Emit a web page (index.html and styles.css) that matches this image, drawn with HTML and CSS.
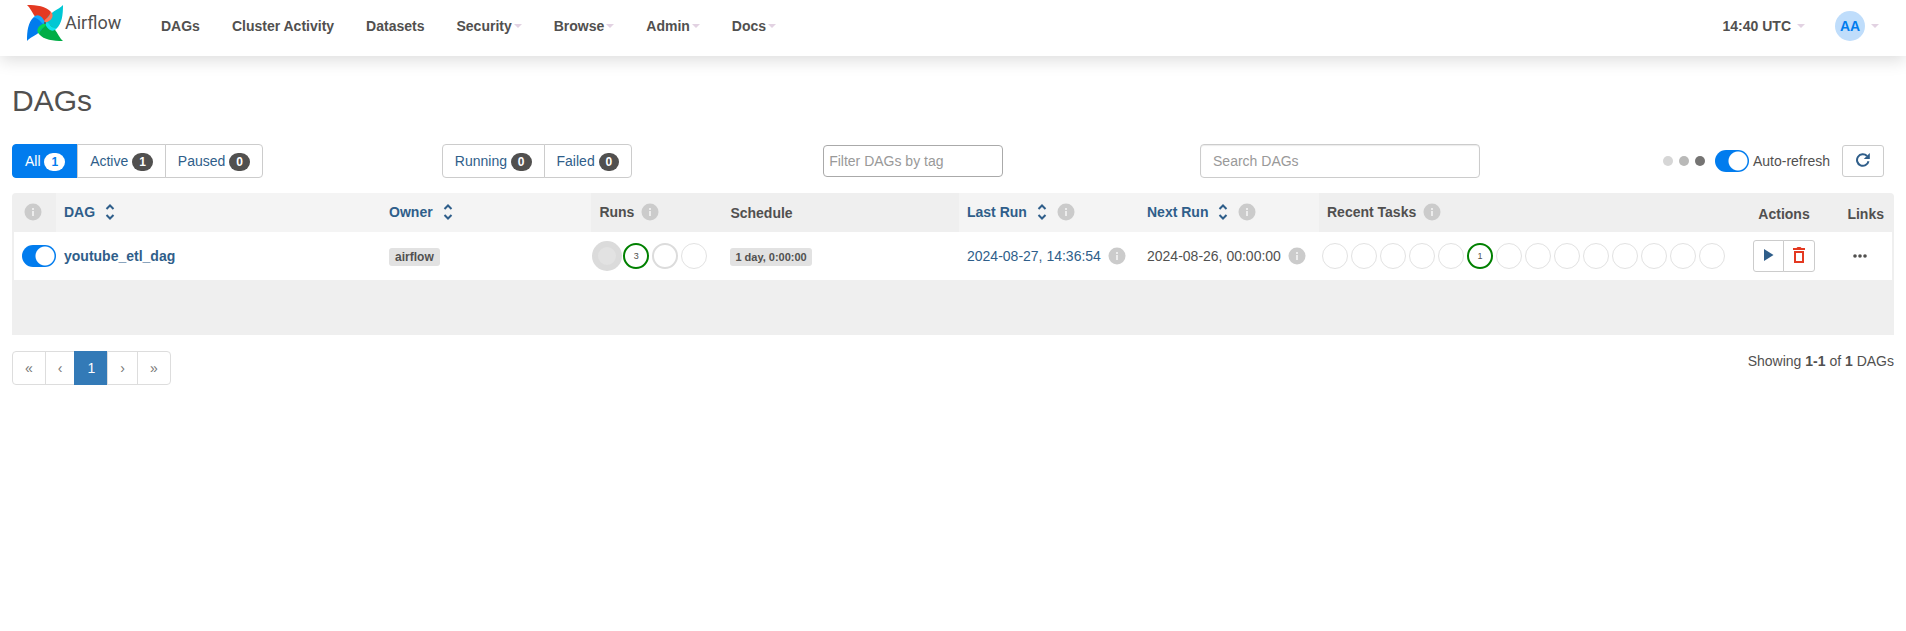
FILE: index.html
```html
<!DOCTYPE html>
<html lang="en">
<head>
<meta charset="utf-8">
<title>DAGs - Airflow</title>
<link rel="stylesheet" href="styles.css">
</head>
<body>
<svg class="defs" aria-hidden="true">
  <symbol id="info" viewBox="0 0 18 18"><circle cx="9" cy="9" r="8.5" fill="#cbcbcb"/><path d="M8 8h2v5H8zM8 5h2v2H8z" fill="#ececec"/></symbol>
  <symbol id="sort" viewBox="0 0 10 16"><path d="M1.500 5 5 1.500 8.500 5M1.500 11 5 14.500 8.500 11" fill="none" stroke="currentColor" stroke-width="2"/></symbol>
  <symbol id="blade" viewBox="0 0 36 36"><path d="M0 0C10 0 19 1 24 7 25 12 22 16 18 18 6 14 7 7 0 0Z"/></symbol>
  <symbol id="fold" viewBox="0 0 36 36"><path d="M23.500 6.500C28 10 25 16 18 18 15 14 23 14 23.500 6.500Z"/></symbol>
</svg>
<header class="navbar">
  <a class="brand" href="#">
    <svg class="pinwheel" viewBox="0 0 36 36" aria-hidden="true">
      <use href="#blade" fill="#e43921"/>
      <use href="#blade" fill="#00c7d4" transform="rotate(90 18 18)"/>
      <use href="#blade" fill="#00ad46" transform="rotate(180 18 18)"/>
      <use href="#blade" fill="#017cee" transform="rotate(270 18 18)"/>
      <use href="#fold" fill="#ff7557"/>
      <use href="#fold" fill="#11e1ee" transform="rotate(90 18 18)"/>
      <use href="#fold" fill="#04d659" transform="rotate(180 18 18)"/>
      <use href="#fold" fill="#14aaff" transform="rotate(270 18 18)"/>
      <circle cx="18" cy="18" r="1" fill="#51504f"/>
    </svg>
    <span>Airflow</span>
  </a>
  <nav class="menu main-menu" aria-label="Main">
    <a href="#">DAGs</a>
    <a href="#">Cluster Activity</a>
    <a href="#">Datasets</a>
    <a href="#">Security<b class="caret"></b></a>
    <a href="#">Browse<b class="caret"></b></a>
    <a href="#">Admin<b class="caret"></b></a>
    <a href="#">Docs<b class="caret"></b></a>
  </nav>
  <nav class="menu account" aria-label="Account">
    <a href="#">14:40 UTC<b class="caret"></b></a>
    <a href="#"><span class="avatar">AA</span><b class="caret"></b></a>
  </nav>
</header>
<main class="page">
  <h2 class="title">DAGs</h2>
  <div class="filters">
    <div class="group">
      <a class="btn active" href="#">All <span class="badge">1</span></a>
      <a class="btn" href="#">Active <span class="badge">1</span></a>
      <a class="btn" href="#">Paused <span class="badge">0</span></a>
    </div>
    <div class="group states">
      <a class="btn" href="#">Running <span class="badge">0</span></a>
      <a class="btn" href="#">Failed <span class="badge">0</span></a>
    </div>
    <input class="tag-filter" type="text" placeholder="Filter DAGs by tag" aria-label="Filter DAGs by tag">
    <input class="search" type="text" placeholder="Search DAGs" aria-label="Search DAGs">
    <div class="refresh">
      <span class="dots"><i></i><i></i><i></i></span>
      <label class="auto"><input class="switch" type="checkbox" checked><span>Auto-refresh</span></label>
      <button class="reload" type="button" aria-label="Refresh"><svg width="14" height="14" viewBox="0 0 14 14"><path d="M12.500 8.300A5.800 5.800 0 1 1 11 3" fill="none" stroke="currentColor" stroke-width="2"/><path d="M13.800 0v6H7.800Z" fill="currentColor"/></svg></button>
    </div>
  </div>
  <div class="table-box">
    <table class="dags">
      <colgroup><col class="c-toggle"><col><col class="c-owner"><col class="c-runs"><col class="c-schedule"><col class="c-date"><col class="c-date"><col class="c-tasks"><col class="c-actions"><col class="c-links"></colgroup>
      <thead>
        <tr>
          <th class="lead"><svg class="info"><use href="#info"/></svg></th>
          <th class="sortable"><a class="head" href="#">DAG<svg class="sort"><use href="#sort"/></svg></a></th>
          <th class="sortable"><a class="head" href="#">Owner<svg class="sort"><use href="#sort"/></svg></a></th>
          <th><span class="head">Runs<svg class="info"><use href="#info"/></svg></span></th>
          <th><span class="low">Schedule</span></th>
          <th class="sortable"><a class="head" href="#">Last Run<svg class="sort"><use href="#sort"/></svg><svg class="info far"><use href="#info"/></svg></a></th>
          <th class="sortable"><a class="head" href="#">Next Run<svg class="sort"><use href="#sort"/></svg><svg class="info far"><use href="#info"/></svg></a></th>
          <th><span class="head">Recent Tasks<svg class="info"><use href="#info"/></svg></span></th>
          <th class="center"><span class="low">Actions</span></th>
          <th class="end"><span class="low">Links</span></th>
        </tr>
      </thead>
      <tbody>
        <tr>
          <td class="toggle"><input class="switch" type="checkbox" checked aria-label="Pause youtube_etl_dag"></td>
          <td><a class="dag-link" href="#">youtube_etl_dag</a></td>
          <td><a class="label" href="#">airflow</a></td>
          <td class="rings"><span class="ring-row"><i class="ring hover"></i><i class="ring ok">3</i><i class="ring thick"></i><i class="ring"></i></span></td>
          <td><a class="label schedule" href="#">1 day, 0:00:00</a></td>
          <td><span class="date"><a href="#">2024-08-27, 14:36:54</a><svg class="info"><use href="#info"/></svg></span></td>
          <td><span class="date">2024-08-26, 00:00:00<svg class="info"><use href="#info"/></svg></span></td>
          <td class="rings"><span class="ring-row"><i class="ring"></i><i class="ring"></i><i class="ring"></i><i class="ring"></i><i class="ring"></i><i class="ring ok">1</i><i class="ring"></i><i class="ring"></i><i class="ring"></i><i class="ring"></i><i class="ring"></i><i class="ring"></i><i class="ring"></i><i class="ring"></i></span></td>
          <td class="center"><span class="actions"><button type="button" aria-label="Trigger DAG"><svg width="10" height="12" viewBox="0 0 10 12"><path d="M0 0v12l9.500-6z" fill="currentColor"/></svg></button><button class="delete" type="button" aria-label="Delete DAG"><svg width="12" height="16" viewBox="0 0 12 16"><path d="M0 1h3.500l1-1h3l1 1H12v2H0zM1 4h10v12H1zM3 6v8h6V6z" fill="currentColor" fill-rule="evenodd"/></svg></button></span></td>
          <td class="center"><button class="more" type="button" aria-label="Links"><svg width="14" height="4" viewBox="0 0 14 4"><g fill="#51504f"><circle cx="2" cy="2" r="1.800"/><circle cx="7" cy="2" r="1.800"/><circle cx="12" cy="2" r="1.800"/></g></svg></button></td>
        </tr>
      </tbody>
    </table>
  </div>
  <div class="footer">
    <nav class="pagination" aria-label="Pages"><a href="#">«</a><a href="#">‹</a><a class="current" href="#">1</a><a href="#">›</a><a href="#">»</a></nav>
    <p class="count">Showing <strong>1-1</strong> of <strong>1</strong> DAGs</p>
  </div>
</main>
</body>
</html>
```
FILE: styles.css
```css
* { box-sizing: border-box; }
body {
  margin: 0;
  background: #fff;
  color: #51504f;
  font: 14px/20px "Liberation Sans", Arial, sans-serif;
}
a { color: #2f5e8a; text-decoration: none; }
svg { display: block; flex: none; }
.defs { position: absolute; width: 0; height: 0; }

.navbar {
  display: flex;
  align-items: flex-start;
  height: 56px;
  padding: 5px 12px 0 27px;
  box-shadow: 0 4px 16px rgba(0, 0, 0, .14);
}
.brand {
  display: flex;
  gap: 2px;
  width: 119px;
  color: #51504f;
  font: 18px/36px Roboto, sans-serif;
}
.pinwheel { width: 36px; height: 36px; }
.menu { display: flex; align-items: center; height: 42px; }
.main-menu { gap: 2px; }
.menu a {
  display: flex;
  align-items: center;
  padding: 0 15px;
  color: #51504f;
  font-weight: bold;
}
.account { margin-left: auto; }
.caret {
  margin-left: 2px;
  border: 4px solid transparent;
  border-top-color: #e2d2e2;
  border-bottom: 0;
}
.account .caret { margin-left: 6px; }
.avatar {
  width: 30px;
  border-radius: 50%;
  background: #bfddfb;
  color: #017cee;
  line-height: 30px;
  text-align: center;
}

.page { padding: 28px 12px 0; }
.title { margin: 0 0 27px; font-size: 30px; font-weight: normal; line-height: 33px; }
.filters { display: flex; align-items: center; justify-content: space-between; padding-right: 10px; }
.group { display: flex; }
.btn {
  padding: 6px 12px;
  border: 1px solid #ccc;
  margin-left: -1px;
  background: #fff;
}
.btn:first-child { margin-left: 0; border-radius: 4px 0 0 4px; }
.btn:last-child { border-radius: 0 4px 4px 0; }
.btn.active { border-color: #017cee; background: #017cee; color: #fff; }
.badge {
  display: inline-block;
  padding: 3px 7px;
  border-radius: 10px;
  background: #51504f;
  color: #fff;
  font-size: 12px;
  font-weight: bold;
  line-height: 12px;
}
.active .badge { background: #fff; color: #017cee; }
.states { margin-right: 12px; }
.tag-filter, .search {
  border: 1px solid #ccc;
  border-radius: 4px;
  background: #fff;
  font: inherit;
}
.tag-filter { width: 180px; height: 32px; margin-right: 18px; padding: 0 5px; border-color: #aaa; }
.search { width: 280px; height: 34px; margin-right: 4px; padding: 0 12px; box-shadow: inset 0 1px 1px rgba(0, 0, 0, .08); }
input::placeholder { color: #999; opacity: 1; }
.refresh { display: flex; align-items: center; }
.dots { display: flex; gap: 6px; margin-right: 10px; }
.dots i { width: 10px; height: 10px; border-radius: 50%; background: #d6d6d6; }
.dots i:nth-child(2) { background: #b9b9b8; }
.dots i:nth-child(3) { background: #757473; }
.auto { display: flex; align-items: center; gap: 4px; margin-right: 12px; }
.switch {
  display: block;
  width: 34px;
  height: 22px;
  margin: 0;
  border-radius: 11px;
  appearance: none;
  background: radial-gradient(circle at 23px 11px, #fff 9px, #017cee 10px);
}
.reload {
  display: grid;
  place-items: center;
  width: 42px;
  height: 32px;
  padding: 0 0 2px;
  border: 1px solid #ccc;
  border-radius: 3px;
  background: #fff;
  color: #2f5e8a;
}

.table-box {
  margin-top: 15px;
  padding: 0 2px 55px;
  border-radius: 4px 4px 0 0;
  background: #efefef;
}
.dags { width: 100%; border-collapse: collapse; table-layout: fixed; }
.c-toggle { width: 42px; }
.c-owner { width: 11.2%; }
.c-runs { width: 131px; }
.c-schedule { width: 12.6%; }
.c-date { width: 180px; }
.c-tasks { width: 422px; }
.c-actions { width: 86px; }
.c-links { width: 65px; }
.dags th { height: 39px; padding: 0 8px 2px; text-align: left; }
.dags td { height: 48px; padding: 0 8px; background: #fff; }
.dags .center { padding: 0; text-align: center; }
.dags .lead { padding-left: 10px; }
.dags .end { padding: 0 8px 0 0; text-align: right; }
.sortable { background: #f4f4f4; }
.head, .date { display: flex; align-items: center; white-space: nowrap; }
.low { display: block; padding-top: 2px; }
.info { width: 18px; height: 18px; margin-left: 7px; }
.lead .info { margin-left: 0; }
.sort { width: 10px; height: 16px; margin-left: 10px; }
.info.far { margin-left: 10px; }
.dags .toggle { padding: 0; }
.toggle .switch { margin-left: 8px; }
.dag-link { font-weight: bold; }
.label {
  display: inline-block;
  padding: 0 6px;
  border-radius: 3px;
  background: #e2e2e2;
  color: #51504f;
  font-size: 12px;
  font-weight: bold;
  line-height: 18px;
}
.label.schedule { padding: 0 5px; font-size: 11px; }
.dags .rings { padding: 0 3px; }
.ring-row { display: flex; align-items: center; gap: 3px; }
.ring {
  flex: none;
  width: 26px;
  height: 26px;
  border: 1px solid #e2e2e2;
  border-radius: 50%;
  font-size: 9px;
  font-style: normal;
  line-height: 24px;
  text-align: center;
}
.ring.ok { border: 2px solid #008000; line-height: 22px; }
.ring.thick { border: 2px solid #dcdcdc; }
.ring.hover { background: #e2e2e2; box-shadow: 0 0 0 2px #dbdbdb; border: 4px solid #dbdbdb; }
.actions { display: inline-flex; vertical-align: middle; }
.actions button {
  display: grid;
  place-items: center;
  width: 31px;
  height: 32px;
  padding: 0 0 2px;
  border: 1px solid #ccc;
  border-radius: 3px 0 0 3px;
  background: #fff;
  color: #2f5e8a;
}
.actions .delete { width: 32px; margin-left: -1px; border-radius: 0 3px 3px 0; color: #e43921; }
.more { display: block; margin: 0 auto; padding: 4px; border: 0; background: none; }

.footer { display: flex; justify-content: space-between; align-items: flex-start; margin-top: 16px; }
.pagination { display: flex; }
.pagination a { padding: 6px 12px; margin-left: -1px; border: 1px solid #ddd; color: #777; }
.pagination a:first-child { margin-left: 0; border-radius: 4px 0 0 4px; }
.pagination a:last-child { border-radius: 0 4px 4px 0; }
.pagination .current { border-color: #337ab7; background: #337ab7; color: #fff; }
.count { margin: 0; }
```
